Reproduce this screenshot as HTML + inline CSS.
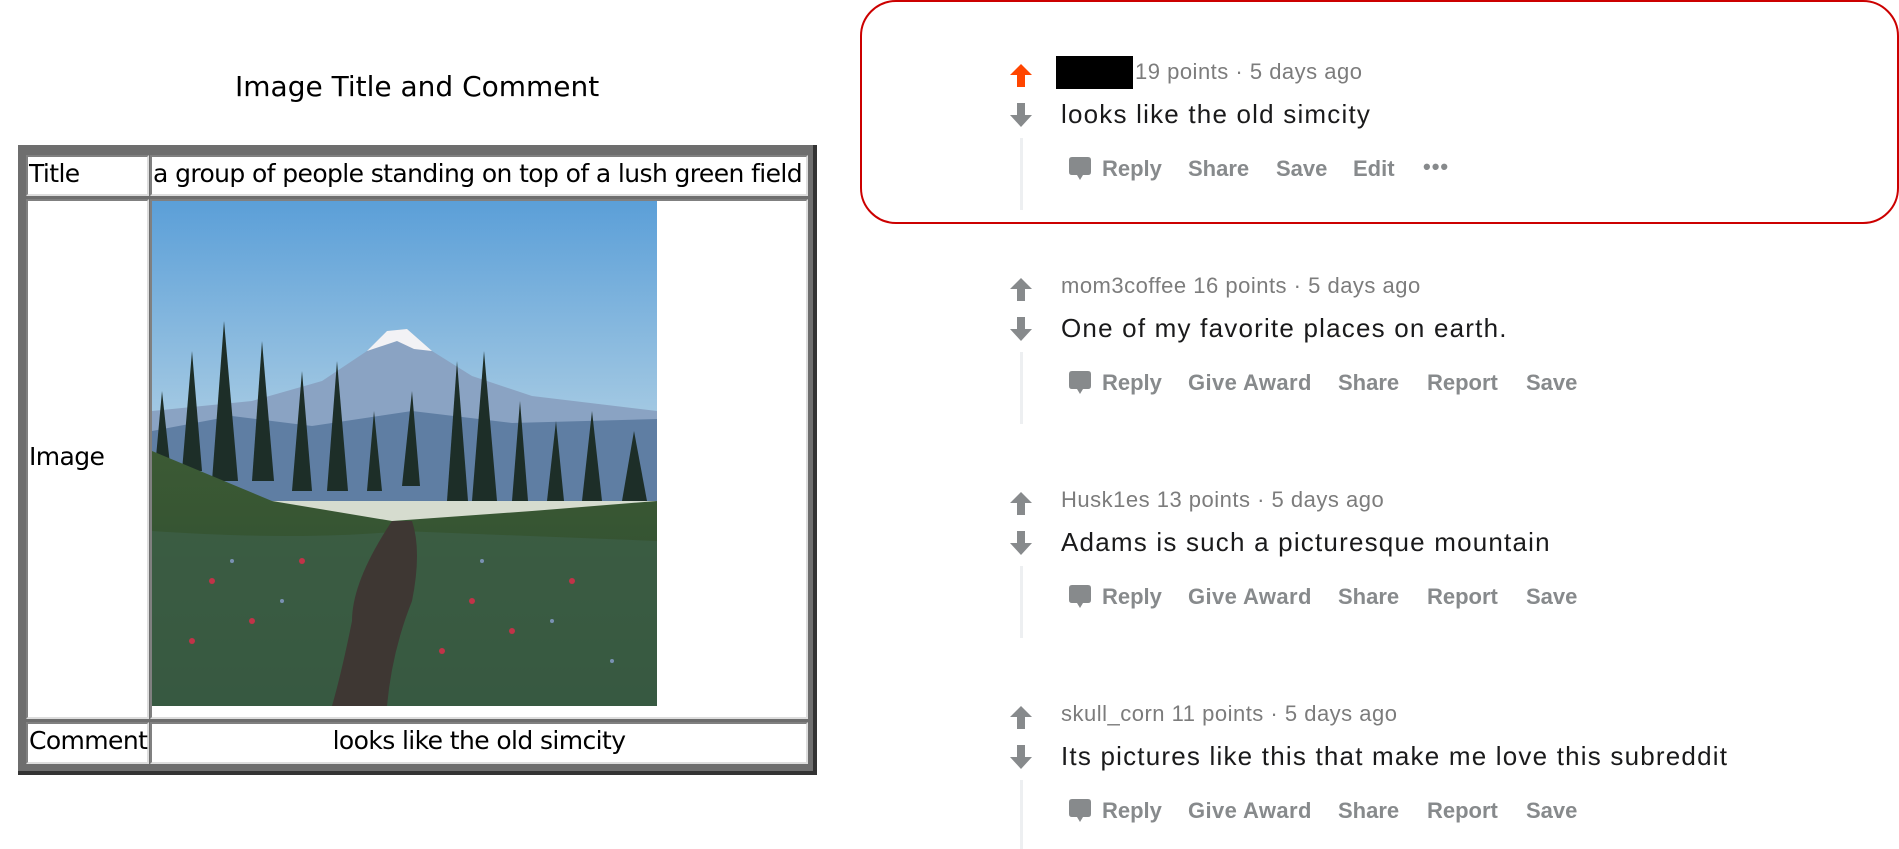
<!DOCTYPE html>
<html><head><meta charset="utf-8">
<style>
*{margin:0;padding:0;box-sizing:border-box}
body{width:1899px;height:849px;background:#fff;position:relative;overflow:hidden;font-family:"Liberation Sans",sans-serif}
.a{position:absolute;white-space:nowrap}
.h{font-family:"DejaVu Sans","Liberation Sans",sans-serif;font-size:28px;letter-spacing:0px;color:#000}
.tb{position:absolute;left:18px;top:145px;width:799px;height:630px;background:#6e6e6e;border-right:4px solid #333;border-bottom:4px solid #333}
.cell{position:absolute;background:#fff;border:2px solid #808080;border-right-color:#ddd;border-bottom-color:#ddd}
.ct{font-family:"DejaVu Sans","Liberation Sans",sans-serif;font-size:25px;letter-spacing:-0.6px;color:#000}
.meta{font-size:22px;letter-spacing:0.5px;color:#7c7c7c}
.body{font-size:26px;letter-spacing:1.2px;color:#1a1a1b}
.act{font-size:22px;font-weight:bold;color:#878a8c}
.line{position:absolute;left:1020px;width:3px;background:#edeff1}
</style></head><body>
<div class="a h" style="left:235px;top:70px">Image Title and Comment</div>
<div class="tb"></div>
<div class="cell" style="left:26px;top:155px;width:123px;height:41px"></div>
<div class="cell" style="left:150px;top:155px;width:658px;height:41px"></div>
<div class="cell" style="left:26px;top:199px;width:123px;height:520px"></div>
<div class="cell" style="left:150px;top:199px;width:658px;height:520px"></div>
<div class="cell" style="left:26px;top:722px;width:123px;height:42px"></div>
<div class="cell" style="left:150px;top:722px;width:658px;height:42px"></div>
<div class="a ct" style="left:29px;top:159px">Title</div>
<div class="a ct" style="left:153px;top:159px">a group of people standing on top of a lush green field</div>
<div class="a ct" style="left:29px;top:442px">Image</div>
<div class="a ct" style="left:29px;top:726px">Comment</div>
<div class="a ct" style="left:150px;width:658px;text-align:center;top:726px">looks like the old simcity</div>
<svg class="a" style="left:152px;top:201px" width="505" height="505" viewBox="0 0 505 505">
<defs>
<linearGradient id="sky" x1="0" y1="0" x2="0" y2="1"><stop offset="0" stop-color="#5b9fd8"/><stop offset=".45" stop-color="#a7cbe3"/><stop offset=".6" stop-color="#d6dccf"/></linearGradient>
<linearGradient id="gr" x1="0" y1="0" x2="0" y2="1"><stop offset="0" stop-color="#3c5a34"/><stop offset="1" stop-color="#2a4a30"/></linearGradient>
</defs>
<rect width="505" height="505" fill="url(#sky)"/>
<path d="M100 200 L170 180 L215 150 L235 130 L255 128 L280 150 L320 175 L380 195 L505 210 L505 280 L0 280 L0 210Z" fill="#8aa3c3"/>
<path d="M215 150 L235 130 L255 128 L280 150 L262 148 L245 140 Z" fill="#f2f2f5"/>
<path d="M0 230 L80 215 L160 225 L260 210 L360 222 L505 218 L505 300 L0 300Z" fill="#5f7ea3"/>
<g fill="#1d2e28">
<path d="M30 270 L40 150 L50 270Z"/><path d="M60 280 L72 120 L86 280Z"/><path d="M100 280 L110 140 L122 280Z"/><path d="M140 290 L150 170 L160 290Z"/><path d="M175 290 L185 160 L196 290Z"/><path d="M215 290 L222 210 L230 290Z"/><path d="M250 285 L260 190 L268 285Z"/><path d="M295 300 L305 160 L316 300Z"/><path d="M320 300 L332 150 L345 300Z"/><path d="M360 300 L368 200 L376 300Z"/><path d="M395 300 L404 220 L412 300Z"/><path d="M430 300 L440 210 L450 300Z"/><path d="M470 300 L482 230 L495 300Z"/><path d="M0 300 L10 190 L22 300Z"/>
</g>
<path d="M0 250 L120 300 L240 320 L380 310 L505 300 L505 505 L0 505Z" fill="url(#gr)"/>
<path d="M0 330 Q150 340 250 330 L505 340 L505 505 L0 505Z" fill="#3d6048" opacity=".7"/>
<path d="M240 320 Q200 380 200 420 Q190 470 180 505 L235 505 Q240 450 260 400 Q270 350 260 320Z" fill="#3e3733"/>
<g fill="#c23348"><circle cx="60" cy="380" r="3"/><circle cx="100" cy="420" r="3"/><circle cx="40" cy="440" r="3"/><circle cx="150" cy="360" r="3"/><circle cx="320" cy="400" r="3"/><circle cx="360" cy="430" r="3"/><circle cx="290" cy="450" r="3"/><circle cx="420" cy="380" r="3"/></g>
<g fill="#8a9fcf" opacity=".8"><circle cx="80" cy="360" r="2"/><circle cx="130" cy="400" r="2"/><circle cx="400" cy="420" r="2"/><circle cx="460" cy="460" r="2"/><circle cx="330" cy="360" r="2"/></g>
</svg>

<div class="a" style="left:860px;top:0;width:1039px;height:224px;border:2px solid #c00;border-radius:36px"></div>

<svg class="a" style="left:1009px;top:63px" width="24" height="24" viewBox="0 0 24 24"><path d="M12 1 L23 12 L16 12 L16 24 L8 24 L8 12 L1 12Z" fill="#ff4500"/></svg>
<svg class="a" style="left:1009px;top:103px" width="24" height="25" viewBox="0 0 24 25"><path d="M8 0 L16 0 L16 12 L23 12 L12 24 L1 12 L8 12Z" fill="#878a8c"/></svg>
<div class="a" style="left:1056px;top:56px;width:77px;height:33px;background:#000"></div>
<div class="a meta" style="left:1135px;top:59px">19 points · 5 days ago</div>
<div class="a body" style="left:1061px;top:99px">looks like the old simcity</div>
<div class="line" style="top:138px;height:72px"></div>

<svg class="a" style="left:1009px;top:277px" width="24" height="24" viewBox="0 0 24 24"><path d="M12 1 L23 12 L16 12 L16 24 L8 24 L8 12 L1 12Z" fill="#878a8c"/></svg>
<svg class="a" style="left:1009px;top:317px" width="24" height="25" viewBox="0 0 24 25"><path d="M8 0 L16 0 L16 12 L23 12 L12 24 L1 12 L8 12Z" fill="#878a8c"/></svg>
<div class="a meta" style="left:1061px;top:273px">mom3coffee 16 points · 5 days ago</div>
<div class="a body" style="left:1061px;top:313px">One of my favorite places on earth.</div>
<div class="line" style="top:352px;height:72px"></div>

<svg class="a" style="left:1009px;top:491px" width="24" height="24" viewBox="0 0 24 24"><path d="M12 1 L23 12 L16 12 L16 24 L8 24 L8 12 L1 12Z" fill="#878a8c"/></svg>
<svg class="a" style="left:1009px;top:531px" width="24" height="25" viewBox="0 0 24 25"><path d="M8 0 L16 0 L16 12 L23 12 L12 24 L1 12 L8 12Z" fill="#878a8c"/></svg>
<div class="a meta" style="left:1061px;top:487px">Husk1es 13 points · 5 days ago</div>
<div class="a body" style="left:1061px;top:527px">Adams is such a picturesque mountain</div>
<div class="line" style="top:566px;height:72px"></div>

<svg class="a" style="left:1009px;top:705px" width="24" height="24" viewBox="0 0 24 24"><path d="M12 1 L23 12 L16 12 L16 24 L8 24 L8 12 L1 12Z" fill="#878a8c"/></svg>
<svg class="a" style="left:1009px;top:745px" width="24" height="25" viewBox="0 0 24 25"><path d="M8 0 L16 0 L16 12 L23 12 L12 24 L1 12 L8 12Z" fill="#878a8c"/></svg>
<div class="a meta" style="left:1061px;top:701px">skull_corn 11 points · 5 days ago</div>
<div class="a body" style="left:1061px;top:741px">Its pictures like this that make me love this subreddit</div>
<div class="line" style="top:780px;height:69px"></div>

<svg style="display:none"><symbol id="ic" viewBox="0 0 22 24"><path d="M3 0 H19 Q22 0 22 3 V15 Q22 18 19 18 H14 L11 23 L8 18 H3 Q0 18 0 15 V3 Q0 0 3 0Z" fill="#878a8c"/></symbol></svg>

<svg class="a" style="left:1069px;top:157px" width="22" height="24"><use href="#ic"/></svg>
<div class="a act" style="left:1102px;top:156px">Reply</div>
<div class="a act" style="left:1188px;top:156px">Share</div>
<div class="a act" style="left:1276px;top:156px">Save</div>
<div class="a act" style="left:1353px;top:156px">Edit</div>
<div class="a act" style="left:1423px;top:154px;letter-spacing:1px">•••</div>

<svg class="a" style="left:1069px;top:371px" width="22" height="24"><use href="#ic"/></svg>
<div class="a act" style="left:1102px;top:370px">Reply</div>
<div class="a act" style="left:1188px;top:370px;letter-spacing:0.4px">Give Award</div>
<div class="a act" style="left:1338px;top:370px">Share</div>
<div class="a act" style="left:1427px;top:370px">Report</div>
<div class="a act" style="left:1526px;top:370px">Save</div>

<svg class="a" style="left:1069px;top:585px" width="22" height="24"><use href="#ic"/></svg>
<div class="a act" style="left:1102px;top:584px">Reply</div>
<div class="a act" style="left:1188px;top:584px;letter-spacing:0.4px">Give Award</div>
<div class="a act" style="left:1338px;top:584px">Share</div>
<div class="a act" style="left:1427px;top:584px">Report</div>
<div class="a act" style="left:1526px;top:584px">Save</div>

<svg class="a" style="left:1069px;top:799px" width="22" height="24"><use href="#ic"/></svg>
<div class="a act" style="left:1102px;top:798px">Reply</div>
<div class="a act" style="left:1188px;top:798px;letter-spacing:0.4px">Give Award</div>
<div class="a act" style="left:1338px;top:798px">Share</div>
<div class="a act" style="left:1427px;top:798px">Report</div>
<div class="a act" style="left:1526px;top:798px">Save</div>
</body></html>
